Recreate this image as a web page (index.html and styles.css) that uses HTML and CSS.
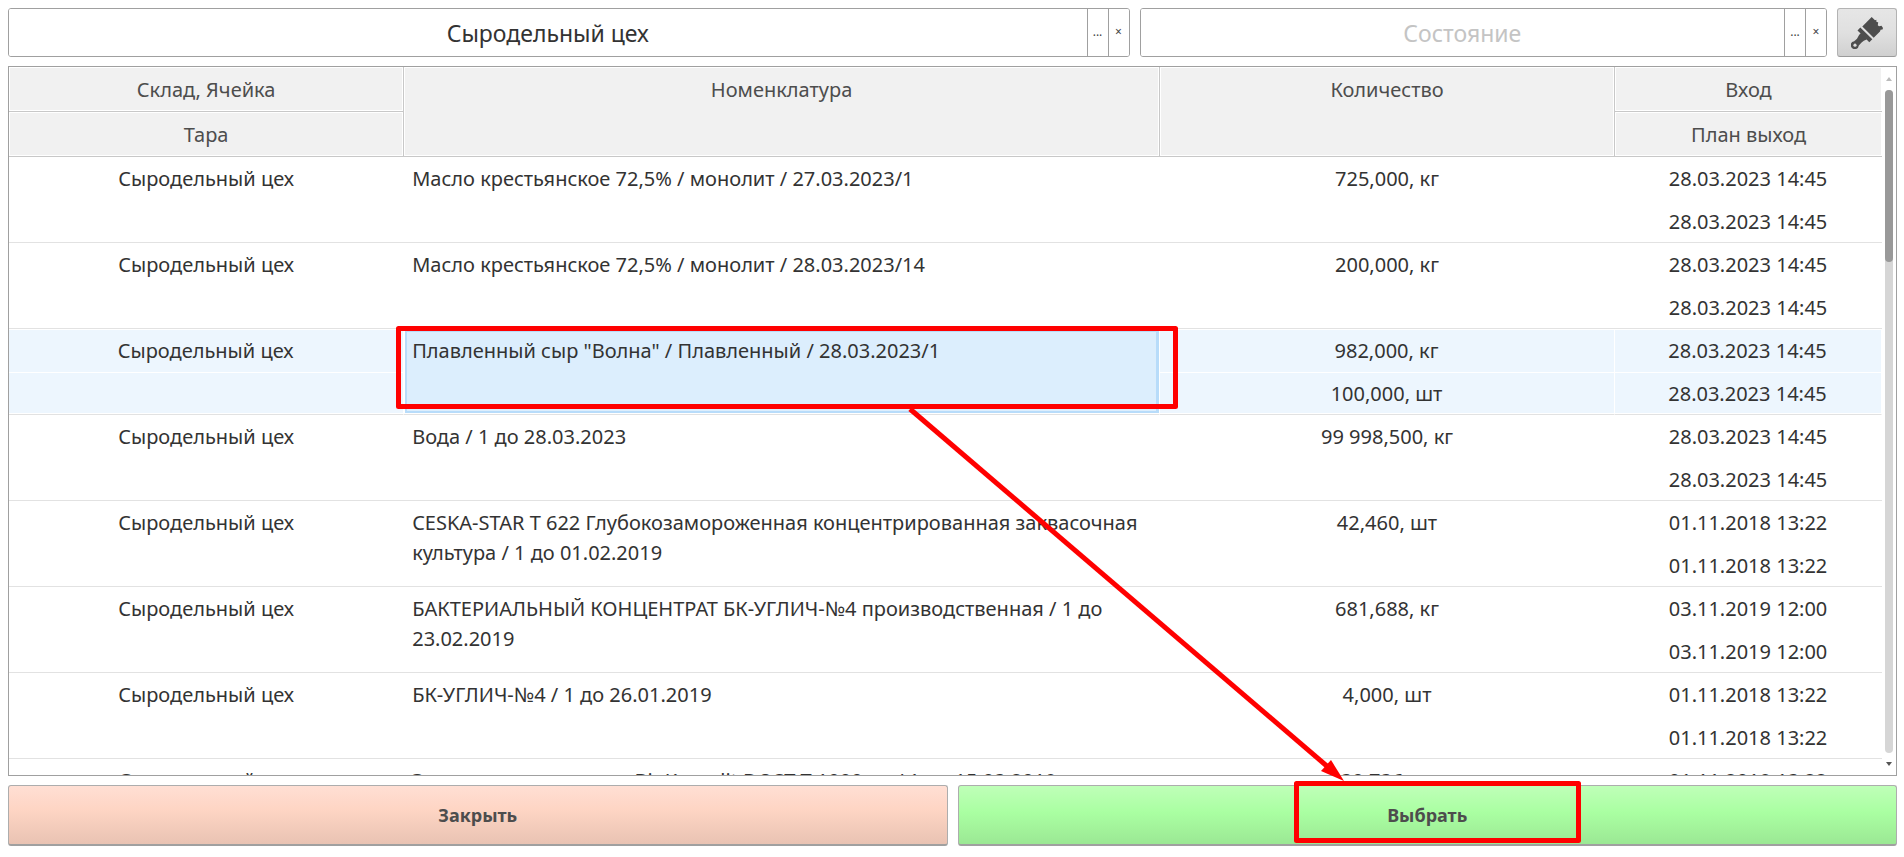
FILE: index.html
```html
<!DOCTYPE html>
<html lang="ru">
<head>
<meta charset="utf-8">
<title>Выбор остатков</title>
<link rel="stylesheet" href="styles.css">
</head>
<body>
<div class="page">
  <div class="filters">
    <div class="field field-store">
      <input class="field-input" type="text" value="Сыродельный цех" aria-label="Склад">
      <button class="field-btn" type="button" aria-label="Выбрать склад">...</button>
      <button class="field-btn field-clear" type="button" aria-label="Очистить склад">×</button>
    </div>
    <div class="field field-state">
      <input class="field-input" type="text" placeholder="Состояние" aria-label="Состояние">
      <button class="field-btn" type="button" aria-label="Выбрать состояние">...</button>
      <button class="field-btn field-clear" type="button" aria-label="Очистить состояние">×</button>
    </div>
    <button class="brush" type="button" aria-label="Очистить отбор">
      <svg width="32" height="32" viewBox="0 0 32 32" aria-hidden="true">
        <path fill="#4d4d4d" d="M20.700 0L24 3.200L25.300 2.700L25.500 5L27.200 5.200L26.800 8.200L28 9.300L30.500 8.800L32 11L31.500 12.600L29.600 12.800L29 14.500L22.700 20.700L11.300 9.500ZM9.300 10.500L21.300 22.300L18.300 25.300L15.600 22.600L12.800 23.800L10.600 25.600L7.800 28.500A4 4 0 1 1 3.200 24.200L6 21.800L8.200 17.800L9.600 16.600L6.500 13.400Z"/>
        <circle cx="4" cy="28.200" r="1.600" fill="#dcdcdc"/>
      </svg>
    </button>
  </div>

  <div class="grid-box">
    <div class="grid-view">
      <table class="grid">
        <colgroup><col class="c-store"><col class="c-item"><col class="c-qty"><col class="c-date"></colgroup>
        <thead>
          <tr><th>Склад, Ячейка</th><th rowspan="2">Номенклатура</th><th rowspan="2">Количество</th><th>Вход</th></tr>
          <tr><th>Тара</th><th>План выход</th></tr>
        </thead>
        <tbody>
          <tr><td>Сыродельный цех</td><td class="item" rowspan="2">Масло крестьянское 72,5% / монолит / 27.03.2023/1</td><td>725,000, кг</td><td>28.03.2023 14:45</td></tr>
          <tr class="second"><td></td><td></td><td>28.03.2023 14:45</td></tr>
        </tbody>
        <tbody>
          <tr><td>Сыродельный цех</td><td class="item" rowspan="2">Масло крестьянское 72,5% / монолит / 28.03.2023/14</td><td>200,000, кг</td><td>28.03.2023 14:45</td></tr>
          <tr class="second"><td></td><td></td><td>28.03.2023 14:45</td></tr>
        </tbody>
        <tbody class="selected">
          <tr><td>Сыродельный цех</td><td class="item current" rowspan="2">Плавленный сыр "Волна" / Плавленный / 28.03.2023/1</td><td>982,000, кг</td><td>28.03.2023 14:45</td></tr>
          <tr class="second"><td></td><td>100,000, шт</td><td>28.03.2023 14:45</td></tr>
        </tbody>
        <tbody>
          <tr><td>Сыродельный цех</td><td class="item" rowspan="2">Вода / 1 до 28.03.2023</td><td>99 998,500, кг</td><td>28.03.2023 14:45</td></tr>
          <tr class="second"><td></td><td></td><td>28.03.2023 14:45</td></tr>
        </tbody>
        <tbody>
          <tr><td>Сыродельный цех</td><td class="item" rowspan="2">CESKA-STAR T 622 Глубокозамороженная концентрированная заквасочная культура / 1 до 01.02.2019</td><td>42,460, шт</td><td>01.11.2018 13:22</td></tr>
          <tr class="second"><td></td><td></td><td>01.11.2018 13:22</td></tr>
        </tbody>
        <tbody>
          <tr><td>Сыродельный цех</td><td class="item" rowspan="2">БАКТЕРИАЛЬНЫЙ КОНЦЕНТРАТ БК-УГЛИЧ-№4 производственная / 1 до 23.02.2019</td><td>681,688, кг</td><td>03.11.2019 12:00</td></tr>
          <tr class="second"><td></td><td></td><td>03.11.2019 12:00</td></tr>
        </tbody>
        <tbody>
          <tr><td>Сыродельный цех</td><td class="item" rowspan="2">БК-УГЛИЧ-№4 / 1 до 26.01.2019</td><td>4,000, шт</td><td>01.11.2018 13:22</td></tr>
          <tr class="second"><td></td><td></td><td>01.11.2018 13:22</td></tr>
        </tbody>
        <tbody>
          <tr><td>Сыродельный цех</td><td class="item" rowspan="2">Закваска для сметаны BioKomplit DOST T 1000 ед / 1 до 15.03.2019</td><td>30,736, кг</td><td>01.11.2018 13:22</td></tr>
          <tr class="second"><td></td><td></td><td>01.11.2018 13:22</td></tr>
        </tbody>
      </table>
    </div>
    <div class="scroll" aria-hidden="true">
      <span class="arrow-up"></span>
      <div class="track"><div class="thumb"></div></div>
      <span class="arrow-down"></span>
    </div>
  </div>

  <div class="actions">
    <button class="action close" type="button">Закрыть</button>
    <button class="action choose" type="button">Выбрать</button>
  </div>

  <svg class="marks" aria-hidden="true">
    <g fill="none" stroke="#f00" stroke-width="5" stroke-linejoin="round">
      <rect x="398.500" y="328.500" width="777" height="78"/>
      <rect x="1296.500" y="783.500" width="282" height="57"/>
      <path d="M910 409L1328 767"/>
    </g>
    <path fill="#f00" d="M1344 781L1321 771L1331 760Z"/>
  </svg>
</div>
</body>
</html>
```

FILE: styles.css
```css
* { box-sizing: border-box; }
body {
  margin: 0;
  background: #fff;
  color: #333;
  font-family: "Noto Sans", "Open Sans", sans-serif;
  font-size: 20px;
}
button, input { font: inherit; color: inherit; margin: 0; }
.page {
  position: relative;
  display: flex;
  flex-direction: column;
  gap: 9px;
  height: 100vh;
  padding: 8px 7px 11px 8px;
}

/* Filters */
.filters { display: flex; gap: 10px; height: 49px; flex: none; }
.field {
  display: flex;
  min-width: 0;
  border: 1px solid #a0a0a0;
  border-radius: 3px;
  overflow: hidden;
}
.field-store { flex: 1122 1 0; }
.field-state { flex: 687 1 0; }
.field-input {
  flex: 1;
  min-width: 0;
  padding: 0;
  border: 0;
  background: #fff;
  text-align: center;
  font-size: 23px;
  outline: 0;
}
.field-input::placeholder { color: #c4c4c4; opacity: 1; }
.field-btn {
  width: 21px;
  padding: 0 0 3px;
  border: 0;
  border-left: 1px solid #a0a0a0;
  background: #fff;
  color: #444;
  font-size: 12px;
}
.brush {
  display: flex;
  align-items: center;
  justify-content: center;
  width: 60px;
  padding: 0;
  border: 1px solid #b3b3b3;
  border-bottom-color: #9a9a9a;
  border-radius: 3px;
  background: linear-gradient(#e6e6e6, #e0e0e0 50%, #d0d0d0);
}

/* Stock table */
.grid-box {
  display: flex;
  flex: 1;
  min-height: 0;
  border: 1px solid #a0a0a0;
}
.grid-view { flex: 1; overflow: hidden; }
.grid {
  width: 100%;
  table-layout: fixed;
  border-collapse: separate;
  border-spacing: 0;
}
.c-store { width: 21.1%; }
.c-item { width: 40.35%; }
.c-qty { width: 24.3%; }
.c-date { width: 14.25%; }
th, td {
  vertical-align: top;
  text-align: center;
  line-height: 30px;
  font-weight: 400;
}
th {
  height: 45px;
  padding: 8px 7px 0;
  border-right: 1px solid #c8c8c8;
  border-bottom: 1px solid #c8c8c8;
  background: #f1f1f1;
  box-shadow: inset 0 0 0 1px #fff;
  color: #4d4d4d;
}
tr > th:last-child { border-right: 0; }
thead tr:last-child th:first-child { border-right: 1px solid #c8c8c8; }
td { height: 43px; padding: 7px 8px 0 7px; }
.second td, .item { border-bottom: 1px solid #e2e2e2; }
.item { padding-left: 8px; text-align: left; }
.selected td {
  border-right: 1px solid #fff;
  background: #edf6fe;
}
.selected tr:first-child td { box-shadow: inset 0 1px #fff; }
.selected .second td { box-shadow: inset 0 1px #fff, inset 0 -1px #fff; }
.selected .current { background: #dceefd; }
.selected tr:first-child .current {
  box-shadow: inset 0 -1px #fff, inset 1px 0 #fff, inset 0 0 0 3px #b8dcfa;
}

/* Scroll bar */
.scroll {
  display: flex;
  flex-direction: column;
  align-items: center;
  width: 14px;
  padding: 10px 0 9px;
  gap: 9px;
}
.arrow-up, .arrow-down { border: 3px solid transparent; }
.arrow-up { border-top: 0; border-bottom: 4px solid #bbb; }
.arrow-down { border-bottom: 0; border-top: 4px solid #555; }
.track { flex: 1; width: 8px; border-radius: 4px; background: #d6d6d6; }
.thumb { height: 26%; border-radius: 4px; background: #999; }

/* Bottom buttons */
.actions { display: flex; gap: 10px; height: 61px; flex: none; }
.action {
  flex: 1;
  border: 1px solid #adadad;
  border-bottom: 2px solid #a0a0a0;
  border-radius: 3px;
  color: #4d4d4d;
  font-size: 18px;
  font-weight: 700;
}
.close { background: linear-gradient(#ffdfd4, #fed5c4 40%, #e9c3b3); }
.choose { background: linear-gradient(#bfffb8, #aaffa2 45%, #9be894); }

/* Guide marks drawn over the form */
.marks {
  position: absolute;
  inset: 0;
  width: 100%;
  height: 100%;
  pointer-events: none;
}
```
